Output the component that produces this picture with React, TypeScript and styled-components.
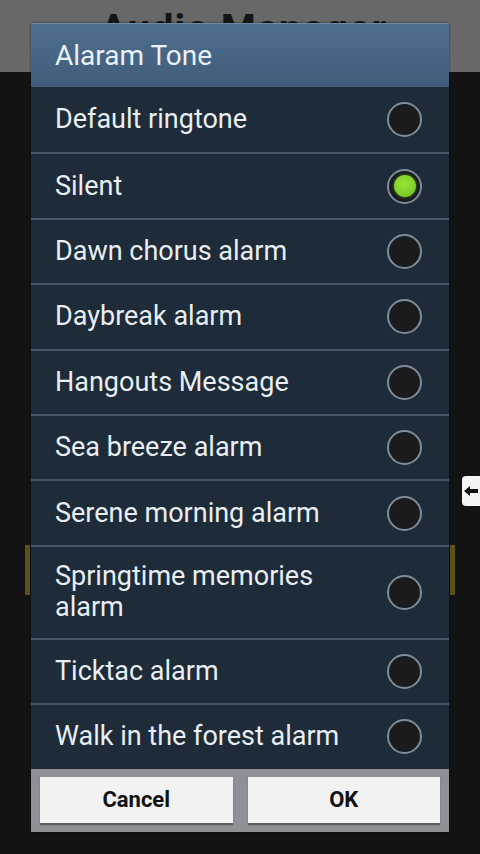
import React, { useState } from "react";
import styled, { createGlobalStyle } from "styled-components";

const GlobalStyle = createGlobalStyle`
  html, body {
    margin: 0;
    padding: 0;
    background: #131313;
    font-family: Roboto, "Noto Sans", "Liberation Sans", sans-serif;
  }
`;

const Screen = styled.div`
  position: relative;
  width: 480px;
  height: 854px;
  overflow: hidden;
  background: #131313;
`;

const AppBar = styled.div`
  height: 72px;
  background: #686868;
  padding-left: 100px;
  box-sizing: border-box;
  overflow: hidden;
`;

const AppTitle = styled.h1`
  margin: 0;
  padding-top: 6px;
  font-size: 40px;
  font-weight: 700;
  color: #151515;
  letter-spacing: 1px;
`;

const Body = styled.div`
  padding: 473px 0 0 25px;
  display: flex;
  flex-direction: column;
`;

const GhostButton = styled.div`
  width: 430px;
  height: 50px;
  box-sizing: border-box;
  border-left: 5px solid #5e5218;
  border-right: 5px solid #5e5218;
`;

const SideTab = styled.div`
  position: absolute;
  right: 0;
  top: 476px;
  width: 18px;
  height: 30px;
  background: #f4f4f4;
  border-radius: 4px 0 0 4px;
  display: flex;
  align-items: center;
  justify-content: center;
`;

const Dialog = styled.div`
  position: absolute;
  left: 31px;
  top: 23px;
  width: 418px;
  display: flex;
  flex-direction: column;
  background: #1e2b38;
  box-shadow: 0 0 2px rgba(0, 0, 0, 0.6);
`;

const TitleBar = styled.div`
  height: 64px;
  box-sizing: border-box;
  padding-left: 24px;
  display: flex;
  align-items: center;
  background: linear-gradient(#4f6f8f, #3f5c7a);
  border-top: 1px solid #6f8aa4;
  color: #e9f0f6;
  font-size: 28px;
`;

const List = styled.div`
  display: flex;
  flex-direction: column;
`;

const Row = styled.div<{ $tall?: boolean }>`
  height: ${(p) => (p.$tall ? 93 : 65.4)}px;
  box-sizing: border-box;
  display: flex;
  align-items: center;
  justify-content: space-between;
  padding: 0 27px 0 24px;
  border-top: 2px solid #46596b;
  cursor: pointer;
  &:first-child {
    border-top: none;
  }
`;

const Label = styled.span`
  color: #e8eef3;
  font-size: 27px;
  line-height: 31px;
  max-width: 300px;
`;

const Radio = styled.span<{ $on: boolean }>`
  width: 35px;
  height: 35px;
  flex-shrink: 0;
  box-sizing: border-box;
  border-radius: 50%;
  border: 2px solid #7d8c99;
  background: #1b1b1d;
  display: flex;
  align-items: center;
  justify-content: center;
  &::after {
    content: "";
    display: ${(p) => (p.$on ? "block" : "none")};
    width: 22px;
    height: 22px;
    border-radius: 50%;
    background: radial-gradient(circle at 45% 40%, #9be33a, #6cc21b);
    box-shadow: 0 0 3px rgba(120, 220, 40, 0.6);
  }
`;

const Footer = styled.div`
  background: #8d9196;
  padding: 8px 9px 9px 9px;
  display: flex;
  gap: 15px;
`;

const Button = styled.button`
  flex: 1;
  height: 46px;
  border: none;
  background: #f2f2f2;
  box-shadow: 0 2px 1px rgba(0, 0, 0, 0.35);
  font-family: Roboto, "Liberation Sans", sans-serif;
  font-weight: 700;
  font-size: 22px;
  color: #111;
  cursor: pointer;
`;

const tones = [
  "Default ringtone",
  "Silent",
  "Dawn chorus alarm",
  "Daybreak alarm",
  "Hangouts Message",
  "Sea breeze alarm",
  "Serene morning alarm",
  "Springtime memories alarm",
  "Ticktac alarm",
  "Walk in the forest alarm",
];

export default function App() {
  const [selected, setSelected] = useState(1);

  return (
    <>
      <GlobalStyle />
      <Screen>
        <AppBar>
          <AppTitle>Audio Manager</AppTitle>
        </AppBar>
        <Body>
          <GhostButton />
        </Body>
        <SideTab>
          <svg width="14" height="12" viewBox="0 0 14 12">
            <path d="M0 6 L6 1 V4 H14 V8 H6 V11 Z" fill="#111" />
          </svg>
        </SideTab>
        <Dialog>
          <TitleBar>Alaram Tone</TitleBar>
          <List>
            {tones.map((t, i) => (
              <Row key={t} $tall={t.length > 24} onClick={() => setSelected(i)}>
                <Label>{t}</Label>
                <Radio $on={selected === i} />
              </Row>
            ))}
          </List>
          <Footer>
            <Button>Cancel</Button>
            <Button>OK</Button>
          </Footer>
        </Dialog>
      </Screen>
    </>
  );
}
